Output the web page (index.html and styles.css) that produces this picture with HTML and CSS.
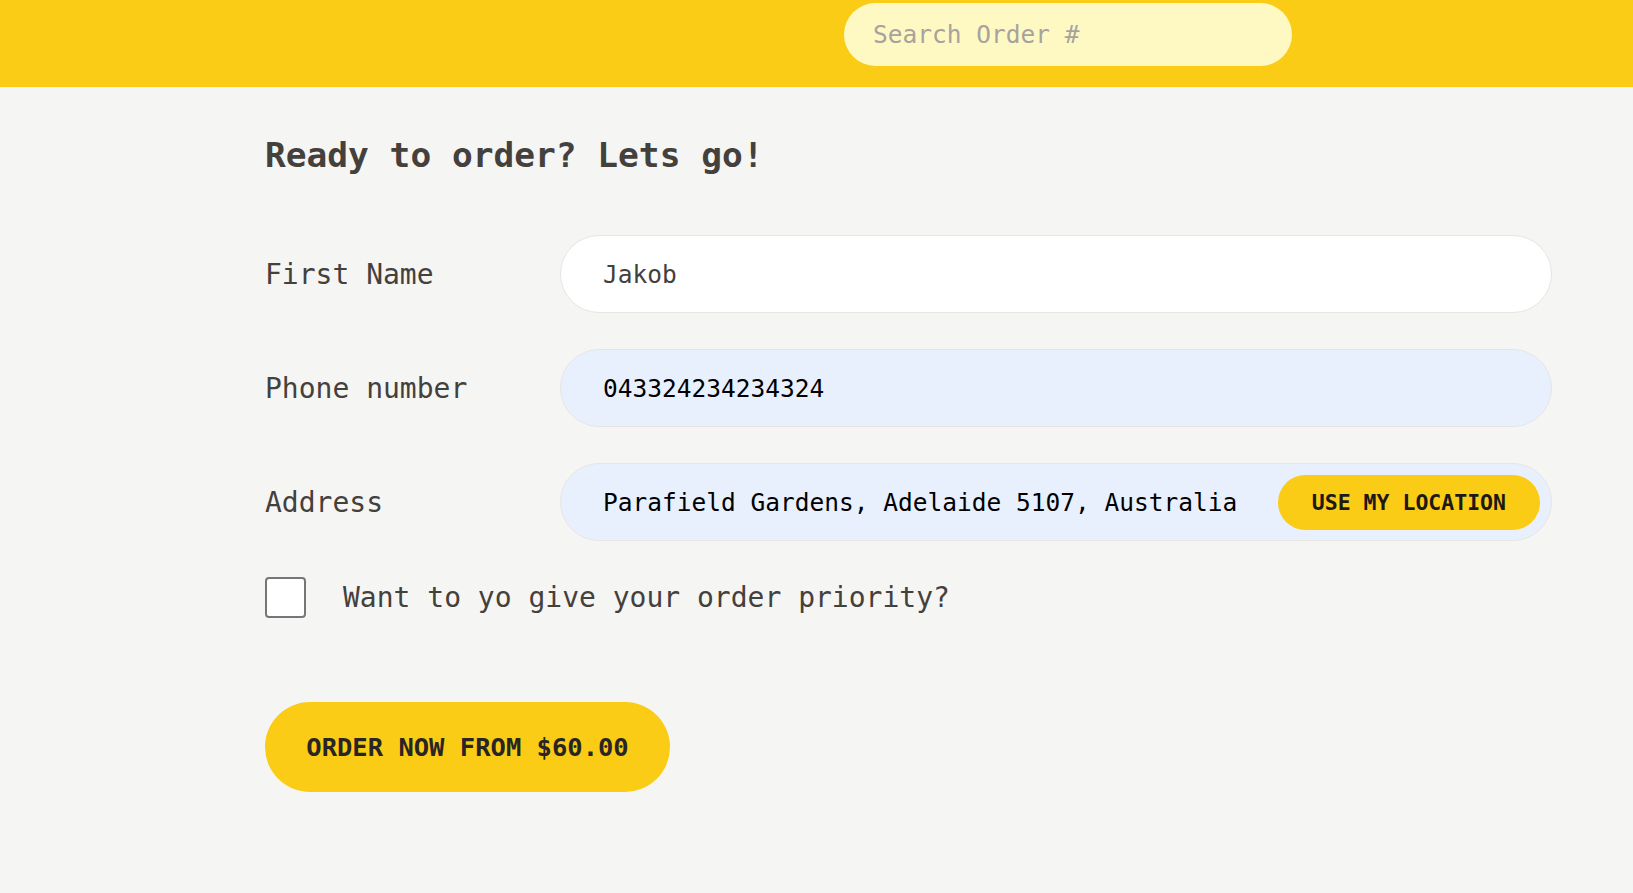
FILE: index.html
```html
<!DOCTYPE html>
<html lang="en">
<head>
<meta charset="utf-8">
<title>Order</title>
<link rel="stylesheet" href="styles.css">
</head>
<body>
<header class="topbar">
  <input class="search" type="text" placeholder="Search Order #">
</header>
<main class="page">
  <h1 class="title">Ready to order? Lets go!</h1>
  <form class="form">
    <div class="row">
      <label class="label" for="fname">First Name</label>
      <input class="field" id="fname" type="text" value="Jakob">
    </div>
    <div class="row">
      <label class="label" for="phone">Phone number</label>
      <input class="field field-auto field-dark" id="phone" type="tel" value="043324234234324">
    </div>
    <div class="row">
      <label class="label" for="addr">Address</label>
      <div class="addr-wrap">
        <input class="field field-auto field-dark" id="addr" type="text" value="Parafield Gardens, Adelaide 5107, Australia">
        <button class="loc-btn" type="button">USE MY LOCATION</button>
      </div>
    </div>
    <div class="check-row">
      <input class="check" id="prio" type="checkbox">
      <label class="check-label" for="prio">Want to yo give your order priority?</label>
    </div>
    <button class="order-btn" type="button">ORDER NOW FROM $60.00</button>
  </form>
</main>
</body>
</html>
```
FILE: styles.css
```css
* { box-sizing: border-box; }

html, body {
  margin: 0;
  padding: 0;
}

body {
  background: #f5f5f4;
  color: #44403c;
  font-family: "DejaVu Sans Mono", "Liberation Mono", monospace;
  min-height: 893px;
}

.topbar {
  display: flex;
  align-items: flex-start;
  height: 87px;
  padding: 3px 0 0 844px;
  background: #facc15;
}

.search {
  width: 448px;
  height: 63px;
  border: none;
  border-radius: 999px;
  background: #fef9c3;
  padding: 0 0 0 29px;
  font-family: inherit;
  font-size: 24.5px;
  color: #44403c;
  outline: none;
}

.search::placeholder {
  color: #a8a29e;
}

.page {
  padding: 47px 0 0 265px;
  width: 1552px;
}

.title {
  margin: 0;
  font-size: 34.5px;
  line-height: 42px;
  font-weight: 700;
  color: #44403c;
}

.form {
  display: flex;
  flex-direction: column;
  margin-top: 59px;
}

.row {
  display: grid;
  grid-template-columns: 295px 1fr;
  align-items: center;
  height: 78px;
  margin-bottom: 36px;
}

.label {
  font-size: 28px;
  color: #44403c;
}

.field {
  width: 100%;
  height: 78px;
  border: 1px solid #e7e5e4;
  border-radius: 999px;
  background: #ffffff;
  padding: 0 0 0 42px;
  font-family: inherit;
  font-size: 24.5px;
  color: #44403c;
  outline: none;
}

.field-auto {
  background: #e8f0fe;
}

.field-dark {
  color: #000000;
}

.addr-wrap {
  position: relative;
  height: 78px;
}

.loc-btn {
  position: absolute;
  top: 12px;
  right: 12px;
  height: 55px;
  padding: 0 34px;
  border: none;
  border-radius: 999px;
  background: #facc15;
  color: #1c1917;
  font-family: inherit;
  font-size: 21.5px;
  font-weight: 700;
  cursor: pointer;
}

.check-row {
  display: flex;
  align-items: center;
  gap: 37px;
  height: 41px;
}

.check {
  appearance: none;
  -webkit-appearance: none;
  margin: 0;
  width: 41px;
  height: 41px;
  border: 2px solid #767676;
  border-radius: 4px;
  background: #ffffff;
  flex: none;
}

.check-label {
  font-size: 28px;
  color: #44403c;
}

.order-btn {
  align-self: flex-start;
  margin-top: 84px;
  width: 405px;
  height: 90px;
  border: none;
  border-radius: 999px;
  background: #facc15;
  color: #292524;
  font-family: inherit;
  font-size: 25.5px;
  font-weight: 700;
  padding: 0;
  cursor: pointer;
}
```
